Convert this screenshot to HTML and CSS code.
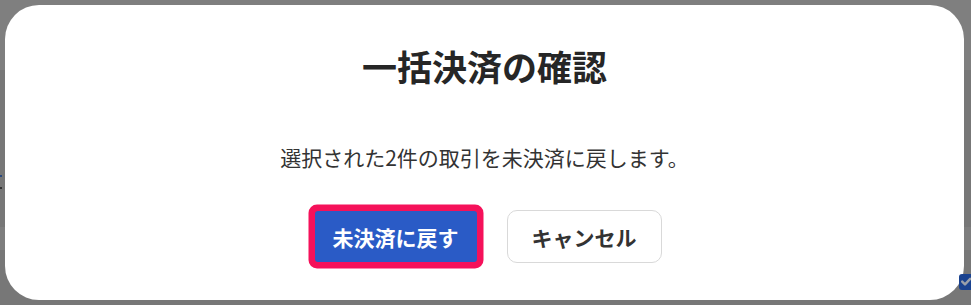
FILE: index.html
```html
<!DOCTYPE html>
<html lang="ja">
<head>
<meta charset="utf-8">
<title>一括決済の確認</title>
<link rel="stylesheet" href="styles.css">
</head>
<body>
<div class="page">
  <div class="band band-top"></div>
  <div class="band band-mid"></div>
  <div class="band band-light"></div>
  <div class="band band-bottom"></div>
  <span class="edge-glyph"></span>
</div>
<div class="modal" role="dialog" aria-labelledby="modal-title">
  <h2 class="modal-title" id="modal-title">一括決済の確認</h2>
  <p class="modal-text">選択された2件の取引を未決済に戻します。</p>
  <div class="modal-actions">
    <button class="btn btn-primary">未決済に戻す</button>
    <button class="btn btn-secondary">キャンセル</button>
  </div>
</div>
<span class="row-check">
  <svg viewBox="0 0 16 16" width="16" height="16"><path d="M3.2 7.6l2.8 2.8 5.2-5.6" fill="none" stroke="#9aa0aa" stroke-width="2.4" stroke-linecap="round" stroke-linejoin="round"/></svg>
</span>
</body>
</html>
```

FILE: styles.css
```css
html, body {
  margin: 0;
  padding: 0;
  width: 971px;
  height: 305px;
  overflow: hidden;
}
body {
  font-family: "Noto Sans CJK JP", "Noto Sans", sans-serif;
  background: #777777;
  position: relative;
}
.page {
  display: flex;
  flex-direction: column;
  height: 305px;
}
.band-top { height: 70px; background: #7f7f7f; }
.band-mid { height: 157px; background: #777777; }
.band-light { height: 23px; background: #7e7e7e; }
.band-bottom { flex: 1; background: #777777; }
.edge-glyph {
  position: absolute;
  left: 0;
  top: 175px;
  width: 2px;
  height: 14px;
  border-top: 2px solid #2a4a80;
  border-bottom: 2px solid #333;
  box-sizing: border-box;
}
.row-check {
  position: absolute;
  left: 959px;
  top: 274px;
  width: 16px;
  height: 16px;
  border-radius: 3px;
  background: #1a428f;
  display: flex;
}
.modal {
  position: absolute;
  left: 5px;
  top: 5px;
  width: 959px;
  height: 295px;
  box-sizing: border-box;
  background: #ffffff;
  border-radius: 34px;
  display: flex;
  flex-direction: column;
  align-items: center;
  padding-top: 36px;
}
.modal-title {
  margin: 0;
  font-size: 35px;
  line-height: 49px;
  font-weight: 700;
  color: #262626;
}
.modal-text {
  margin: 52px 0 0;
  font-size: 21px;
  line-height: 31px;
  color: #333333;
}
.modal-actions {
  display: flex;
  align-items: center;
  gap: 30px;
  margin-top: 37px;
  padding-left: 7px;
}
.btn {
  font-family: inherit;
  font-size: 21px;
  font-weight: 700;
  cursor: pointer;
  padding: 0;
}
.btn-primary {
  width: 162px;
  height: 51px;
  border: none;
  border-radius: 3px;
  background: #2a5bc6;
  color: #ffffff;
  box-shadow: 0 0 0 6.5px #f5115a;
}
.btn-secondary {
  width: 155px;
  height: 53px;
  border: 1px solid #d9d9d9;
  border-radius: 10px;
  background: #ffffff;
  color: #333333;
}
```
